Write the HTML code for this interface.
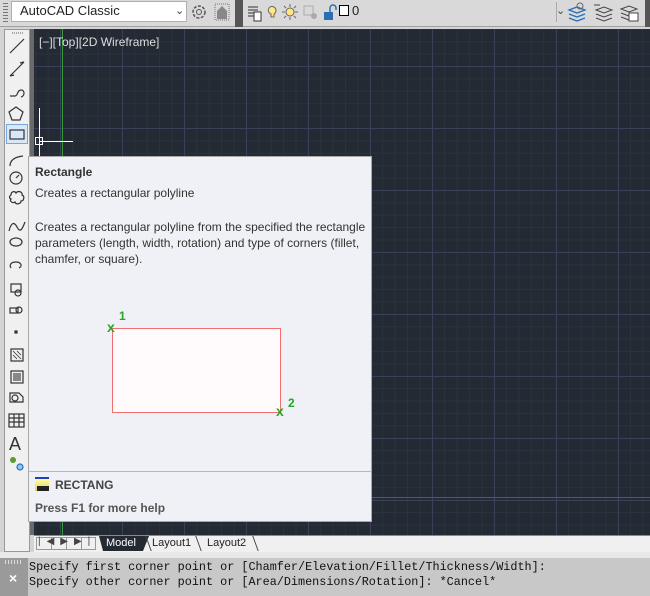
<!DOCTYPE html>
<html><head><meta charset="utf-8"><style>
*{margin:0;padding:0;box-sizing:border-box}
body{width:650px;height:596px;overflow:hidden;background:#d4d4d4;font-family:"Liberation Sans",sans-serif;position:relative}
.abs{position:absolute}
#top{left:0;top:0;width:650px;height:27px;background:#d9d9d9;border-bottom:1px solid #a0a0a0}
#canvas{left:34px;top:29px;width:616px;height:506px;background-color:#232a33;
background-image:
linear-gradient(to right,#39415a 1px,transparent 1px),
linear-gradient(to bottom,#39415a 1px,transparent 1px),
linear-gradient(to right,#2a323e 1px,transparent 1px),
linear-gradient(to bottom,#2a323e 1px,transparent 1px);
background-size:62px 62px,62px 62px,12.4px 12.4px,12.4px 12.4px;
background-position:26px 37px,26px 37px,26px 37px,26px 37px}
.tt{font-size:12px;color:#333}
</style></head><body>
<div id="top" class="abs"></div>
<div class="abs" style="left:3px;top:3px;width:5px;height:20px;background:repeating-linear-gradient(#777 0 1px,transparent 1px 3px)"></div>
<div class="abs" style="left:11px;top:1px;width:176px;height:21px;background:#fff;border:1px solid #b0b0b0"></div>
<div class="abs tt" style="left:20px;top:3px;font-size:13px;color:#222">AutoCAD Classic</div>
<div class="abs" style="left:175px;top:4px;font-size:11px;color:#444">&#8964;</div>
<svg class="abs" style="left:189px;top:2px" width="44" height="22"><circle cx="10" cy="10" r="6" fill="none" stroke="#555" stroke-width="1.5" stroke-dasharray="3 1.5"/><circle cx="10" cy="10" r="2.5" fill="none" stroke="#555"/><rect x="26" y="2" width="14" height="16" fill="none" stroke="#777" stroke-dasharray="1 1"/><path d="M28 17V9l5-5 5 5v8z" fill="#888"/></svg>
<div class="abs" style="left:235px;top:0;width:8px;height:27px;background:#555"></div>
<svg class="abs" style="left:246px;top:3px" width="100" height="20"><path d="M2 4h10M2 7h10M2 10h10M2 13h6" stroke="#333"/><rect x="8" y="9" width="7" height="9" fill="#fff" stroke="#333"/><path d="M24 4a4 4 0 1 1 4 7v3h-3v-3a4 4 0 0 1-1-7z" fill="#ffe680" stroke="#666"/><circle cx="44" cy="9" r="4" fill="#ffe680" stroke="#666"/><path d="M44 1v3M44 14v3M36 9h3M49 9h3M38 3l2 2M48 13l2 2M38 15l2-2M48 5l2-2" stroke="#666"/><rect x="58" y="3" width="9" height="9" fill="none" stroke="#aaa"/><circle cx="68" cy="13" r="3" fill="#aaa"/><rect x="78" y="9" width="9" height="8" fill="#2a6fb5"/><path d="M84 9V5a3 3 0 0 1 6 0v2" fill="none" stroke="#2a6fb5" stroke-width="1.5"/></svg>
<div class="abs" style="left:339px;top:5px;width:10px;height:11px;background:#fff;border:1px solid #000"></div>
<div class="abs tt" style="left:352px;top:3px;font-size:13px;color:#222">0</div>
<div class="abs" style="left:556px;top:2px;width:6px;height:20px;border-left:1px solid #aaa"></div>
<div class="abs" style="left:556px;top:4px;font-size:11px;color:#444">&#8964;</div>
<svg class="abs" style="left:566px;top:2px" width="80" height="22"><path d="M3 8l8-3 8 3-8 3zM3 12l8 3 8-3M3 16l8 3 8-3" fill="none" stroke="#2a6fb5" stroke-width="1.3"/><circle cx="14" cy="4" r="3" fill="none" stroke="#666"/><path d="M30 8l8-3 8 3-8 3zM30 12l8 3 8-3M30 16l8 3 8-3" fill="none" stroke="#444"/><path d="M28 3h6" stroke="#444"/><path d="M55 7l8-3 8 3-8 3zM55 11l8 3M55 15l8 3" fill="none" stroke="#444"/><rect x="63" y="11" width="9" height="8" fill="#fff" stroke="#444"/></svg>
<div class="abs" style="left:645px;top:0;width:5px;height:27px;background:#555"></div>

<div id="canvas" class="abs"></div>
<div class="abs" style="left:62px;top:29px;width:1px;height:506px;background:#3a9a3a"></div>
<div class="abs" style="left:371px;top:497px;width:279px;height:1px;background:#b83030"></div>
<div class="abs" style="left:39px;top:35px;font-size:12px;color:#ddd">[&#8722;][Top][2D Wireframe]</div>
<div class="abs" style="left:39px;top:108px;width:1px;height:48px;background:#fff"></div>
<div class="abs" style="left:39px;top:141px;width:34px;height:1px;background:#fff"></div>
<div class="abs" style="left:35px;top:137px;width:8px;height:8px;border:1px solid #fff"></div>

<div class="abs" style="left:4px;top:29px;width:26px;height:523px;background:#f0f0f0;border:1px solid #999"></div>
<div class="abs" style="left:30px;top:29px;width:4px;height:506px;background:#6a6a6a"></div>
<div class="abs" style="left:0;top:552px;width:650px;height:6px;background:#e8e8e8"></div>
<div class="abs" style="left:6px;top:124px;width:22px;height:20px;background:#d8e8f8;border:1px solid #7aa7d8"></div>
<svg class="abs" style="left:4px;top:30px" width="26" height="450" fill="none" stroke="#333" stroke-width="1.2">
<path d="M8 3h12" stroke="#777" stroke-dasharray="1 1"/>
<path d="M6 23L20 9"/><path d="M6 46L20 32M6 46l4-1M20 32l-4 1"/><path d="M6 66h5c3 0 2-6 6-6s4 6 0 7"/>
<path d="M12 77l7 5-3 8H8l-3-8z"/><rect x="6" y="100" width="14" height="9"/>
<path d="M6 136c0-6 5-9 13-10"/><circle cx="12" cy="148" r="6"/><path d="M12 148l3-3"/>
<path d="M7 165c0-4 4-4 5-2 2-3 7-1 6 2 3 1 2 6-1 6 0 3-5 4-6 1-3 2-6-2-4-3-2-1-2-3 0-4z"/>
<path d="M5 201c2-8 5-10 8-4s5 3 8-5"/><ellipse cx="12" cy="212" rx="6" ry="4"/>
<path d="M15 238c4-2 2-6-3-6s-7 3-5 6"/>
<rect x="7" y="254" width="10" height="8"/><circle cx="14" cy="263" r="3"/>
<rect x="6" y="278" width="8" height="5"/><circle cx="15" cy="280" r="3"/>
<rect x="11" y="301" width="2" height="2" fill="#333"/>
<rect x="7" y="319" width="12" height="12"/><path d="M9 321l8 8M9 325l4 4M13 321l4 4" stroke-width="0.8"/>
<rect x="7" y="341" width="12" height="12"/><rect x="9" y="343" width="8" height="8" fill="#888" stroke="none"/>
<path d="M6 363h9l4 4v5H6z"/><circle cx="11" cy="368" r="3"/>
<rect x="5" y="384" width="15" height="13"/><path d="M5 388h15M5 392h15M10 384v13M15 384v13"/>
<text x="5" y="420" font-size="18" fill="#333" stroke="none" font-family="Liberation Sans">A</text>
<circle cx="9" cy="430" r="3" fill="#5a9a30" stroke="none"/><circle cx="16" cy="437" r="3" fill="#8cc8f0" stroke="#2a6fb5"/>
</svg>

<div class="abs" style="left:28px;top:156px;width:344px;height:366px;background:#f0f1f6;border:1px solid #a8a8a8"></div>
<div class="abs" style="left:35px;top:165px;font-size:12px;font-weight:bold;color:#333">Rectangle</div>
<div class="abs" style="left:35px;top:186px;font-size:12px;color:#333">Creates a rectangular polyline</div>
<div class="abs" style="left:35px;top:219px;font-size:12px;color:#333;line-height:16px;width:335px">Creates a rectangular polyline from the specified the rectangle parameters (length, width, rotation) and type of corners (fillet, chamfer, or square).</div>
<div class="abs" style="left:112px;top:328px;width:169px;height:85px;background:#fffbfd;border:1px solid #f07070"></div>
<div class="abs" style="left:107px;top:319px;font-size:14px;font-weight:bold;color:#22a822">x</div>
<div class="abs" style="left:119px;top:309px;font-size:12px;font-weight:bold;color:#22a822">1</div>
<div class="abs" style="left:276px;top:403px;font-size:14px;font-weight:bold;color:#22a822">x</div>
<div class="abs" style="left:288px;top:396px;font-size:12px;font-weight:bold;color:#22a822">2</div>
<div class="abs" style="left:29px;top:471px;width:342px;height:1px;background:#b8b8b8"></div>
<div class="abs" style="left:35px;top:477px;width:14px;height:14px;background:linear-gradient(#ffffa0,#e0d060);border-top:2px solid #2040c0"></div>
<div class="abs" style="left:37px;top:486px;width:12px;height:5px;background:#222"></div>
<div class="abs" style="left:55px;top:478px;font-size:12px;font-weight:bold;color:#444">RECTANG</div>
<div class="abs" style="left:35px;top:501px;font-size:12px;font-weight:bold;color:#555">Press F1 for more help</div>

<div class="abs" style="left:34px;top:535px;width:616px;height:17px;background:#f0f0f0;border-top:1px solid #888"></div>
<div class="abs" style="left:36px;top:537px;width:60px;height:13px;border:1px solid #999;background:repeating-linear-gradient(to right,#f0f0f0 0 14px,#999 14px 15px)"></div>
<div class="abs" style="left:38px;top:536px;font-size:10px;color:#444;letter-spacing:6px">|◀▶▶|</div>
<div class="abs" style="left:99px;top:536px;width:50px;height:15px;background:#232a33;clip-path:polygon(0 0,100% 0,88% 100%,8% 100%)"></div>
<div class="abs" style="left:106px;top:537px;font-size:11px;color:#fff">Model</div>
<div class="abs" style="left:152px;top:537px;font-size:11px;color:#222">Layout1</div>
<div class="abs" style="left:148px;top:536px;width:1px;height:15px;background:#444;transform:skewX(20deg)"></div>
<div class="abs" style="left:198px;top:536px;width:1px;height:15px;background:#444;transform:skewX(20deg)"></div>
<div class="abs" style="left:207px;top:537px;font-size:11px;color:#222">Layout2</div>
<div class="abs" style="left:255px;top:536px;width:1px;height:15px;background:#444;transform:skewX(20deg)"></div>

<div class="abs" style="left:0;top:558px;width:650px;height:38px;background:#c8c8c8"></div>
<div class="abs" style="left:0;top:558px;width:28px;height:38px;background:#9a9a9a"></div>
<div class="abs" style="left:5px;top:560px;width:18px;height:4px;background:repeating-linear-gradient(to right,#ddd 0 1px,transparent 1px 3px)"></div>
<div class="abs" style="left:9px;top:570px;font-size:14px;font-weight:bold;color:#fff">×</div>
<div class="abs" style="left:29px;top:560px;font-family:'Liberation Mono',monospace;font-size:11.8px;line-height:15px;color:#111;white-space:pre">Specify first corner point or [Chamfer/Elevation/Fillet/Thickness/Width]:
Specify other corner point or [Area/Dimensions/Rotation]: *Cancel*</div>
</body></html>
